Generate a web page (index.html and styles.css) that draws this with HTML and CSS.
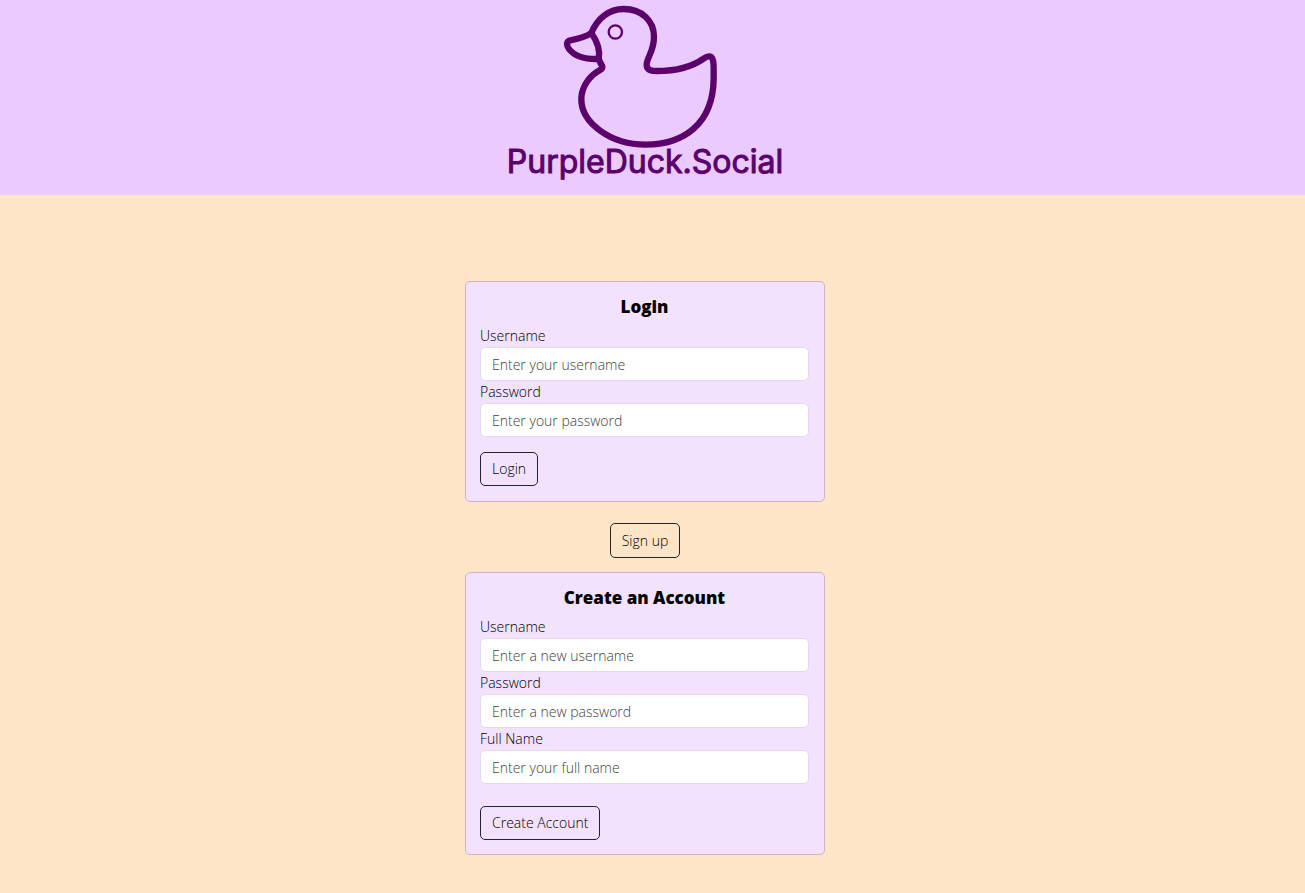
FILE: index.html
```html
<!DOCTYPE html>
<html lang="en">
<head>
<meta charset="utf-8">
<title>PurpleDuck.Social</title>
<link rel="stylesheet" href="styles.css">
</head>
<body>
<header class="banner">
  <svg class="duck" viewBox="0 0 570 447" aria-hidden="true">
    <g fill="none" stroke="#5c006b" stroke-width="19" stroke-linecap="round" stroke-linejoin="round">
      <path d="M124 99C142 55 177 27 221 27C276 27 312 63 312 110C312 155 290 172 290 194C290 207 300 213 320 213C381 213 427 200 462 175C473 167 485 165 489 181C492 194 491 215 491 237C489 372 401 434 287 434C181 434 94 368 94 298C94 265 113 234 142 215C159 205 161 203 152 190L146 177C151 150 141 123 124 99Z"/>
      <path d="M124 99C107 111 81 117 61 121C48 124 49 136 57 147C75 171 111 178 146 177"/>
      <circle cx="196" cy="96" r="20" stroke-width="7"/>
    </g>
  </svg>
  <h1 class="wordmark">PurpleDuck.Social</h1>
</header>
<main class="content">
  <form class="card">
    <h2 class="title">Login</h2>
    <label class="label" for="login-user">Username</label>
    <input class="field" id="login-user" type="text" placeholder="Enter your username">
    <label class="label" for="login-pass">Password</label>
    <input class="field" id="login-pass" type="password" placeholder="Enter your password">
    <button class="button login" type="button">Login</button>
  </form>
  <button class="button signup" type="button">Sign up</button>
  <form class="card">
    <h2 class="title">Create an Account</h2>
    <label class="label" for="new-user">Username</label>
    <input class="field" id="new-user" type="text" placeholder="Enter a new username">
    <label class="label" for="new-pass">Password</label>
    <input class="field" id="new-pass" type="password" placeholder="Enter a new password">
    <label class="label" for="new-name">Full Name</label>
    <input class="field" id="new-name" type="text" placeholder="Enter your full name">
    <button class="button create" type="button">Create Account</button>
  </form>
</main>
</body>
</html>
```
FILE: styles.css
```css
* { box-sizing: border-box; }

body {
  margin: 0;
  min-height: 100vh;
  background: #fee5c8;
  color: #000;
  font: 300 14px/22px "Open Sans", "Noto Sans", sans-serif;
}

.banner {
  display: flex;
  flex-direction: column;
  align-items: center;
  padding: 0 15px 21px 0;
  background: #eacaff;
}

.duck {
  display: block;
  width: 190px;
  height: 149px;
}

.wordmark {
  margin: 0;
  color: #5c006b;
  font: 400 32px/25px Inter, sans-serif;
  -webkit-text-stroke: 1px #5c006b;
  stroke-linejoin: round;
}

.content {
  display: flex;
  flex-direction: column;
  align-items: center;
  padding: 86px 15px 38px 0;
}

.card {
  display: flex;
  flex-direction: column;
  width: 360px;
  max-width: 100%;
  padding: 14px 15px 14px 14px;
  border: 1px solid #cbb4cb;
  border-radius: 5px;
  background: #f2e2fe;
}

.title {
  margin: 0 0 7px;
  font-size: 17px;
  line-height: 22px;
  font-weight: 800;
  text-align: center;
}

.field {
  width: 100%;
  height: 34px;
  padding: 0 11px;
  border: 1px solid #e2d8ea;
  border-radius: 5px;
  background: #fff;
  color: #212529;
  font: inherit;
}

.field::placeholder {
  color: #3c4146;
  opacity: 1;
}

.button {
  align-self: flex-start;
  height: 34px;
  padding: 0 11px;
  border: 1px solid #212529;
  border-radius: 5px;
  background: transparent;
  color: #000;
  font: inherit;
}

.login { margin: 15px 0 1px; }

.signup {
  align-self: center;
  height: 35px;
  margin: 21px 0 14px;
}

.create { margin-top: 22px; }
```
